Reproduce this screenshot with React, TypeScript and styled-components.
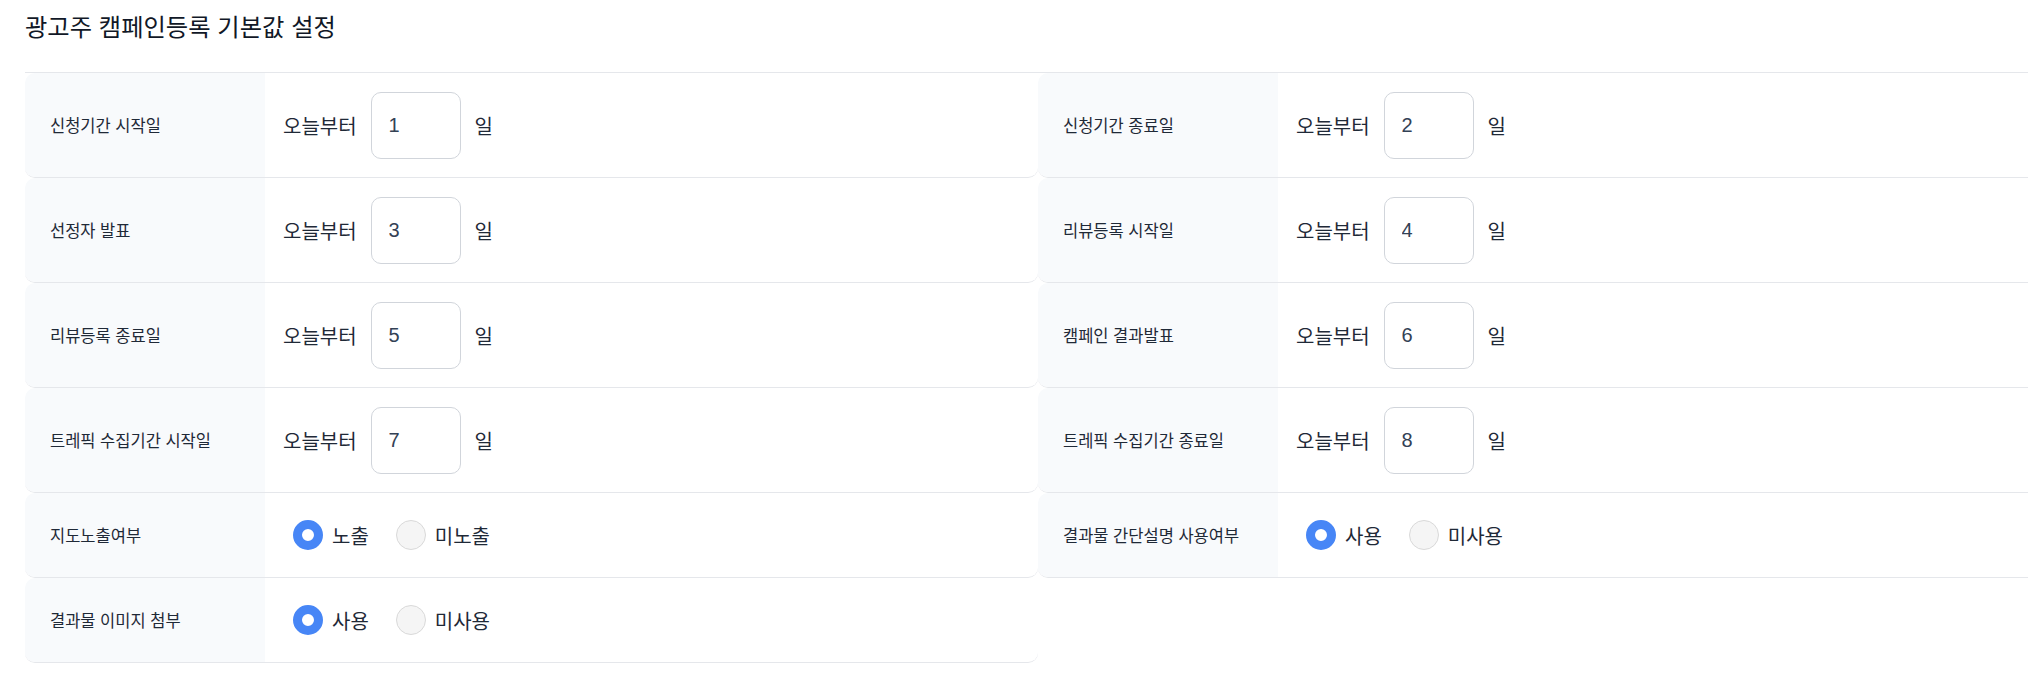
import styled, { createGlobalStyle } from "styled-components";

const GlobalStyle = createGlobalStyle`
    html, body {
        margin: 0;
        padding: 0;
        overflow: hidden;
        background: #ffffff;
    }
    body {
        font-family: "Liberation Sans", "Noto Sans CJK KR", sans-serif;
        color: #1f2937;
    }
`;

const Page = styled.div`
    padding-left: 25px;
    width: 2026px;
`;

const Header = styled.div`
    height: 73px;
    padding-top: 10px;
    box-sizing: border-box;
    border-bottom: 1px solid #e5e7eb;
`;

const Title = styled.h2`
    margin: 0;
    font-size: 24.3px;
    font-weight: 400;
    line-height: 36px;
    color: #111827;
`;

const Grid = styled.div`
    display: grid;
    grid-template-columns: repeat(2, 1013px);
`;

const Card = styled.div<{ $compact?: boolean }>`
    display: grid;
    grid-template-columns: 240px 1fr;
    height: ${(p) => (p.$compact ? "85px" : "105px")};
    box-sizing: border-box;
    border-bottom: 1px solid #e5e7eb;
    border-radius: 10px;
    overflow: hidden;
    background: #ffffff;
`;

const Label = styled.div`
    display: flex;
    align-items: center;
    padding-left: 25px;
    background: #f8fafc;
    font-size: 16.5px;
    color: #1f2937;
`;

const Value = styled.div`
    display: flex;
    align-items: center;
    gap: 14px;
    padding-left: 18px;
    font-size: 20px;
    color: #1f2937;
`;

const DayInput = styled.input`
    width: 90px;
    height: 67px;
    box-sizing: border-box;
    padding: 0 17px;
    border: 1px solid #d1d5db;
    border-radius: 10px;
    font-family: "Liberation Sans", sans-serif;
    font-size: 20px;
    color: #334155;
    background: #ffffff;
    outline: none;
`;

const RadioGroup = styled.div`
    display: flex;
    align-items: center;
    gap: 27px;
    padding-left: 10px;
`;

const RadioOption = styled.label`
    display: flex;
    align-items: center;
    gap: 9px;
    cursor: pointer;
`;

const RadioInput = styled.input.attrs({ type: "radio" })`
    appearance: none;
    margin: 0;
    width: 30px;
    height: 30px;
    box-sizing: border-box;
    border-radius: 50%;
    border: 1px solid #d9d9d9;
    background: #f5f5f5;
    cursor: pointer;
    &:checked {
        border: 9px solid #4786f6;
        background: #ffffff;
    }
`;

const dayRows: [string, number][] = [
    ["신청기간 시작일", 1],
    ["신청기간 종료일", 2],
    ["선정자 발표", 3],
    ["리뷰등록 시작일", 4],
    ["리뷰등록 종료일", 5],
    ["캠페인 결과발표", 6],
    ["트레픽 수집기간 시작일", 7],
    ["트레픽 수집기간 종료일", 8],
];

const radioRows: { name: string; label: string; options: string[] }[] = [
    { name: "map", label: "지도노출여부", options: ["노출", "미노출"] },
    { name: "desc", label: "결과물 간단설명 사용여부", options: ["사용", "미사용"] },
    { name: "image", label: "결과물 이미지 첨부", options: ["사용", "미사용"] },
];

function App() {
    return (
        <Page>
            <GlobalStyle />
            <Header>
                <Title>광고주 캠페인등록 기본값 설정</Title>
            </Header>
            <Grid>
                {dayRows.map(([label, day]) => (
                    <Card key={label}>
                        <Label>{label}</Label>
                        <Value>
                            <span>오늘부터</span>
                            <DayInput defaultValue={day} />
                            <span>일</span>
                        </Value>
                    </Card>
                ))}
                {radioRows.map((row) => (
                    <Card key={row.name} $compact>
                        <Label>{row.label}</Label>
                        <Value>
                            <RadioGroup>
                                {row.options.map((opt, i) => (
                                    <RadioOption key={opt}>
                                        <RadioInput name={row.name} defaultChecked={i === 0} />
                                        <span>{opt}</span>
                                    </RadioOption>
                                ))}
                            </RadioGroup>
                        </Value>
                    </Card>
                ))}
            </Grid>
        </Page>
    );
}

export default App;
